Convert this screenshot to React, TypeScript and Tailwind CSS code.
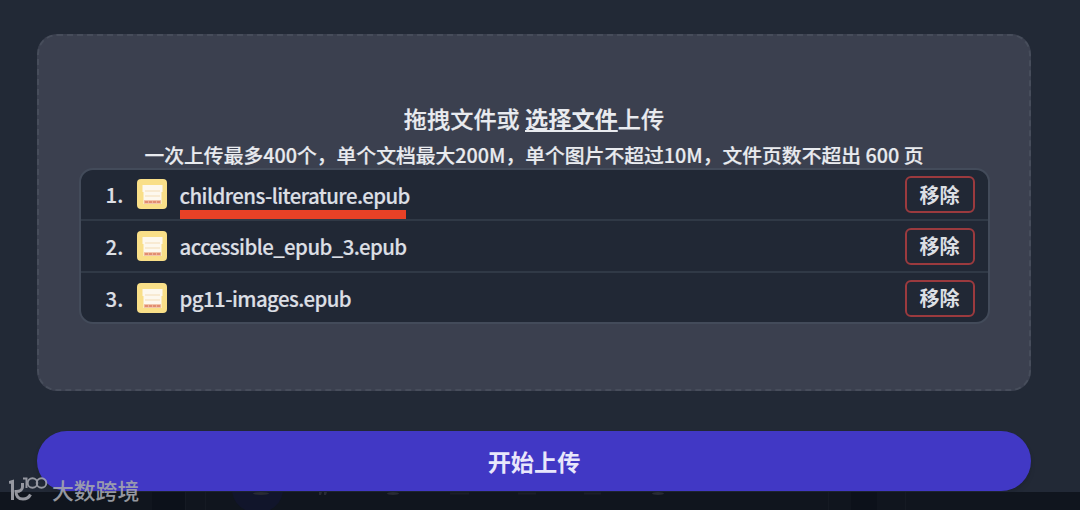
const FILES = ['childrens-literature.epub', 'accessible_epub_3.epub', 'pg11-images.epub']

function FileIcon() {
  return (
    <svg width="31" height="31" viewBox="0 0 31 31" className="shrink-0">
      <rect x="0" y="0" width="30" height="30" rx="4" fill="#f9df88" />
      <path d="M5.500 6h20v7h-1v12h-18v-12h-1z" fill="#fdf8ee" />
      <path d="M8 12h15M8 17h15" stroke="#f3dcb6" strokeWidth="1.2" />
      <path d="M7 23h17" stroke="#eeb595" strokeWidth="3.500" />
      <path d="M8 23h15" stroke="#dd7d62" strokeWidth="2" strokeDasharray="3 1" opacity="0.7" />
    </svg>
  )
}

function FileRow({ index, name, marked }: { index: number; name: string; marked: boolean }) {
  return (
    <li className="flex h-[51.4px] items-center border-b-2 border-[#303946] pr-[13px] pl-[25px] last:border-b-0">
      <span className="w-[31px] text-[20.4px] font-medium text-[#dcdfe4] [-webkit-text-stroke:0.2px]">
        {index}.
      </span>
      <FileIcon />
      <span className="relative ml-3 text-[20.4px] leading-[30px] font-medium tracking-[-0.55px] whitespace-nowrap text-[#dcdfe4] [-webkit-text-stroke:0.2px]">
        {name}
        {marked && <span className="absolute top-[30px] left-0 h-[9px] w-[226px] bg-[#e84126]" />}
      </span>
      <button className="ml-auto h-[37px] w-[70px] rounded-md border-2 border-[#9b3a3e] text-[20px] leading-none font-bold text-[#dcdfe4]">
        移除
      </button>
    </li>
  )
}

function Watermark() {
  return (
    <div className="absolute top-[476px] left-[9px] flex text-[#a3a5ad] opacity-90">
      <svg width="40" height="28" viewBox="0 0 40 28" fill="none" stroke="currentColor">
        <path d="M0 6.500l3.500-1V24" strokeWidth="3" />
        <path d="M13.500 7v4c0 2-2 4.500-6.500 4.500 0 6 3 7.500 7 7.500 3.500 0 6-1.500 7.500-4.500" strokeWidth="3" />
        <path d="M14 2.500h3.500V12" strokeWidth="2" />
        <circle cx="23.500" cy="7" r="4.800" strokeWidth="1.900" />
        <circle cx="32.500" cy="7" r="4.800" strokeWidth="1.900" />
      </svg>
      <span className="ml-[3px] text-[21.8px] leading-[28px] font-medium whitespace-nowrap">大数跨境</span>
    </div>
  )
}

// Top edge of the dimmed page below the dialog
function PageBehind() {
  return (
    <svg width="1080" height="18" viewBox="0 0 1080 18" className="block">
      <rect width="1080" height="18" fill="#10151e" />
      <rect x="152" width="33" height="18" fill="#0c111a" />
      <rect x="851" width="26" height="18" fill="#0c111a" />
      <path d="M185.500 0v18M205.500 0v18M828.500 0v18M905.500 0v18" stroke="#151a23" />
      <path d="M232 0h51q-2 12-13 18h-25q-11-6-13-18z" fill="#11152b" />
      <g fill="#282b34">
        <ellipse cx="261" cy="1.500" rx="8" ry="1.500" />
        <ellipse cx="393" cy="1.500" rx="6" ry="1.500" />
        <ellipse cx="658" cy="1.500" rx="6" ry="1.500" />
        <path d="M319 0h3l-1 3h-2zM324 0h3l-1 3h-2z" />
      </g>
      <path d="M450 1.500h19M518 1.500h18M584 1.500h17" stroke="#1a1e27" strokeWidth="2" />
    </svg>
  )
}

export default function App() {
  return (
    <div className="relative h-[510px] w-[1080px] overflow-hidden bg-[#222936] font-['Noto_Sans_CJK_SC',sans-serif]">
      <main className="flex h-[492px] flex-col pt-[34px] pr-[49px] pl-[37px]">
        <section className="flex h-[357px] flex-col items-center rounded-[20px] border-2 border-dashed border-[#474d5b] bg-[#3b404f] pt-[65px]">
          <p className="text-[23.2px] leading-[34px] font-medium text-[#e9ebef] [-webkit-text-stroke:0.2px]">
            拖拽文件或{' '}
            <a className="font-bold underline decoration-2 underline-offset-2 [-webkit-text-stroke:0]">选择文件</a>上传
          </p>
          <p className="mt-[5px] text-[19.8px] leading-[30px] font-medium whitespace-nowrap text-[#e9ebef] [-webkit-text-stroke:0.2px]">
            一次上传最多400个，单个文档最大200M，单个图片不超过10M，文件页数不超出 600 页
          </p>
          <ol className="-mt-[2px] h-[156px] w-[911px] rounded-[14px] border-2 border-[#434b5a] bg-[#212835]">
            {FILES.map((name, i) => (
              <FileRow key={name} index={i + 1} name={name} marked={i === 0} />
            ))}
          </ol>
        </section>
        <button className="mt-10 h-[60px] shrink-0 rounded-full bg-[#4138c5] text-[23.2px] font-bold text-[#e8e7fb] shadow-md">
          开始上传
        </button>
      </main>
      <PageBehind />
      <Watermark />
    </div>
  )
}
